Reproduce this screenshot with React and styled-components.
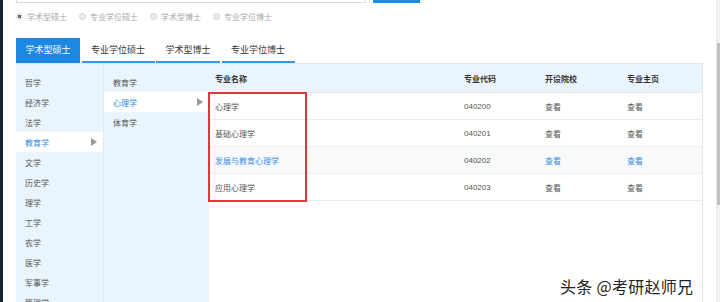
import styled, { createGlobalStyle } from "styled-components";

const GlobalStyle = createGlobalStyle`
    html, body {
        margin: 0;
        padding: 0;
        background: #fff;
        font-family: "Liberation Sans", "Noto Sans CJK SC", sans-serif;
    }
`;

const Page = styled.div`
    display: flex;
    flex-direction: row;
    position: relative;
    width: 720px;
    height: 302px;
    overflow: hidden;
`;

const EdgeStrip = styled.div`
    width: 3px;
    background-color: #13232f;
    flex-shrink: 0;
`;

const Main = styled.div`
    flex: 1;
    padding: 0 13px;
    display: flex;
    flex-direction: column;

    & > * {
        flex-shrink: 0;
    }
`;

const SearchRow = styled.div`
    display: flex;
    flex-direction: row;
    height: 3px;
    gap: 7px;
`;

const SearchInput = styled.div`
    width: 350px;
    height: 3px;
    box-sizing: border-box;
    border: 1px solid #dcdcdc;
    border-top: none;
`;

const SearchButton = styled.div`
    width: 47px;
    height: 3px;
    background-color: #1c8ce8;
`;

const RadioRow = styled.div`
    display: flex;
    flex-direction: row;
    align-items: center;
    gap: 12px;
    height: 12px;
    margin-top: 7px;
`;

const RadioItem = styled.div`
    display: flex;
    align-items: center;
    gap: 4px;
    font-size: 8px;
    color: #a8a8a8;
`;

const RadioDot = styled.span`
    width: 7px;
    height: 7px;
    box-sizing: border-box;
    border-radius: 50%;
    border: 1px solid #d4d4d4;
    background: ${(p) => (p.checked ? "radial-gradient(circle, #666 0 1.6px, #eee 2px)" : "#ececec")};
`;

const TabBar = styled.div`
    display: flex;
    flex-direction: row;
    gap: 1.5px;
    margin-top: 16px;
    height: 25px;
`;

const Tab = styled.div`
    display: flex;
    align-items: center;
    justify-content: center;
    padding: 0 9.5px;
    font-size: 9px;
    box-sizing: border-box;
    color: ${(p) => (p.active ? "#fff" : "#333")};
    background-color: ${(p) => (p.active ? "#1c88e3" : "#fff")};
    border-bottom: 2px solid ${(p) => (p.active ? "#1c88e3" : "#3a97e6")};
`;

const Panel = styled.div`
    position: relative;
    display: grid;
    grid-template-columns: 88px 105px 494px;
    height: 260px;
    border-top: 1px solid #e2e7eb;
`;

const Column = styled.div`
    background-color: #eaf4fc;
    padding-top: 8px;
    border-right: ${(p) => (p.divided ? "1px solid #dde9f2" : "none")};
    box-sizing: border-box;
`;

const ColumnItem = styled.div`
    display: flex;
    align-items: center;
    justify-content: space-between;
    height: 20px;
    padding: 0 6px 0 9px;
    font-size: 8px;
    color: ${(p) => (p.active ? "#2d8be4" : "#555")};
    background-color: ${(p) => (p.active ? "#fff" : "transparent")};
`;

const Arrow = styled.span`
    width: 0;
    height: 0;
    border-top: 4px solid transparent;
    border-bottom: 4px solid transparent;
    border-left: 6px solid #999;
`;

const Table = styled.div`
    background-color: #fff;
    border-right: 1px solid #e2e7eb;
    display: flex;
    flex-direction: column;
`;

const Row = styled.div`
    display: grid;
    grid-template-columns: 249px 81px 82px 1fr;
    align-items: center;
    flex-shrink: 0;
    height: ${(p) => (p.header ? "29px" : "27px")};
    box-sizing: border-box;
    border-bottom: 1px solid ${(p) => (p.header ? "#e3e9ee" : "#ececec")};
    background-color: ${(p) => (p.header ? "#eaf4fc" : p.striped ? "#f7f9fb" : "#fff")};
    font-size: 8px;
    font-weight: ${(p) => (p.header ? "bold" : "normal")};
    color: ${(p) => (p.header ? "#333" : "#555")};
`;

const Cell = styled.div`
    padding-left: 6px;
    color: ${(p) => (p.link ? "#3a8de2" : "inherit")};
`;

const Highlight = styled.div`
    position: absolute;
    left: 192px;
    top: 28px;
    width: 99px;
    height: 110px;
    box-sizing: border-box;
    border: 2px solid #e8333a;
    pointer-events: none;
`;

const ScrollTrack = styled.div`
    width: 4px;
    flex-shrink: 0;
    background-color: #f1f1f1;
    border-left: 1px solid #e6e6e6;
    padding-top: 43px;
`;

const ScrollThumb = styled.div`
    height: 162px;
    background-color: #c1c1c1;
`;

const Watermark = styled.div`
    position: absolute;
    left: 560px;
    top: 274px;
    font-size: 16px;
    color: #222;
    letter-spacing: 0.3px;
    text-shadow: 1px 1px 0 #fff, -1px -1px 0 #fff, 1px -1px 0 #fff, -1px 1px 0 #fff;
    font-family: "Noto Sans CJK SC", sans-serif;
`;

const radios = ["学术型硕士", "专业学位硕士", "学术型博士", "专业学位博士"];
const categories = ["哲学", "经济学", "法学", "教育学", "文学", "历史学", "理学", "工学", "农学", "医学", "军事学", "管理学"];
const subjects = ["教育学", "心理学", "体育学"];
const majors = [
    { name: "心理学", code: "040200" },
    { name: "基础心理学", code: "040201" },
    { name: "发展与教育心理学", code: "040202", hover: true },
    { name: "应用心理学", code: "040203" },
];

const App = () => {
    return (
        <>
            <GlobalStyle />
            <Page>
                <EdgeStrip />
                <Main>
                    <SearchRow>
                        <SearchInput />
                        <SearchButton />
                    </SearchRow>

                    <RadioRow>
                        {radios.map((label, index) => (
                            <RadioItem key={label}>
                                <RadioDot checked={index === 0} />
                                {label}
                            </RadioItem>
                        ))}
                    </RadioRow>

                    <TabBar>
                        {radios.map((label, index) => (
                            <Tab key={label} active={index === 0}>{label}</Tab>
                        ))}
                    </TabBar>

                    <Panel>
                        <Column divided>
                            {categories.map((item) => (
                                <ColumnItem key={item} active={item === "教育学"}>
                                    {item}
                                    {item === "教育学" && <Arrow />}
                                </ColumnItem>
                            ))}
                        </Column>
                        <Column>
                            {subjects.map((item) => (
                                <ColumnItem key={item} active={item === "心理学"}>
                                    {item}
                                    {item === "心理学" && <Arrow />}
                                </ColumnItem>
                            ))}
                        </Column>
                        <Table>
                            <Row header>
                                <Cell>专业名称</Cell>
                                <Cell>专业代码</Cell>
                                <Cell>开设院校</Cell>
                                <Cell>专业主页</Cell>
                            </Row>
                            {majors.map((m) => (
                                <Row key={m.code} striped={m.hover}>
                                    <Cell link={m.hover}>{m.name}</Cell>
                                    <Cell>{m.code}</Cell>
                                    <Cell link={m.hover}>查看</Cell>
                                    <Cell link={m.hover}>查看</Cell>
                                </Row>
                            ))}
                        </Table>
                        <Highlight />
                    </Panel>
                </Main>
                <ScrollTrack>
                    <ScrollThumb />
                </ScrollTrack>
                <Watermark>头条 @考研赵师兄</Watermark>
            </Page>
        </>
    );
};

export default App;
